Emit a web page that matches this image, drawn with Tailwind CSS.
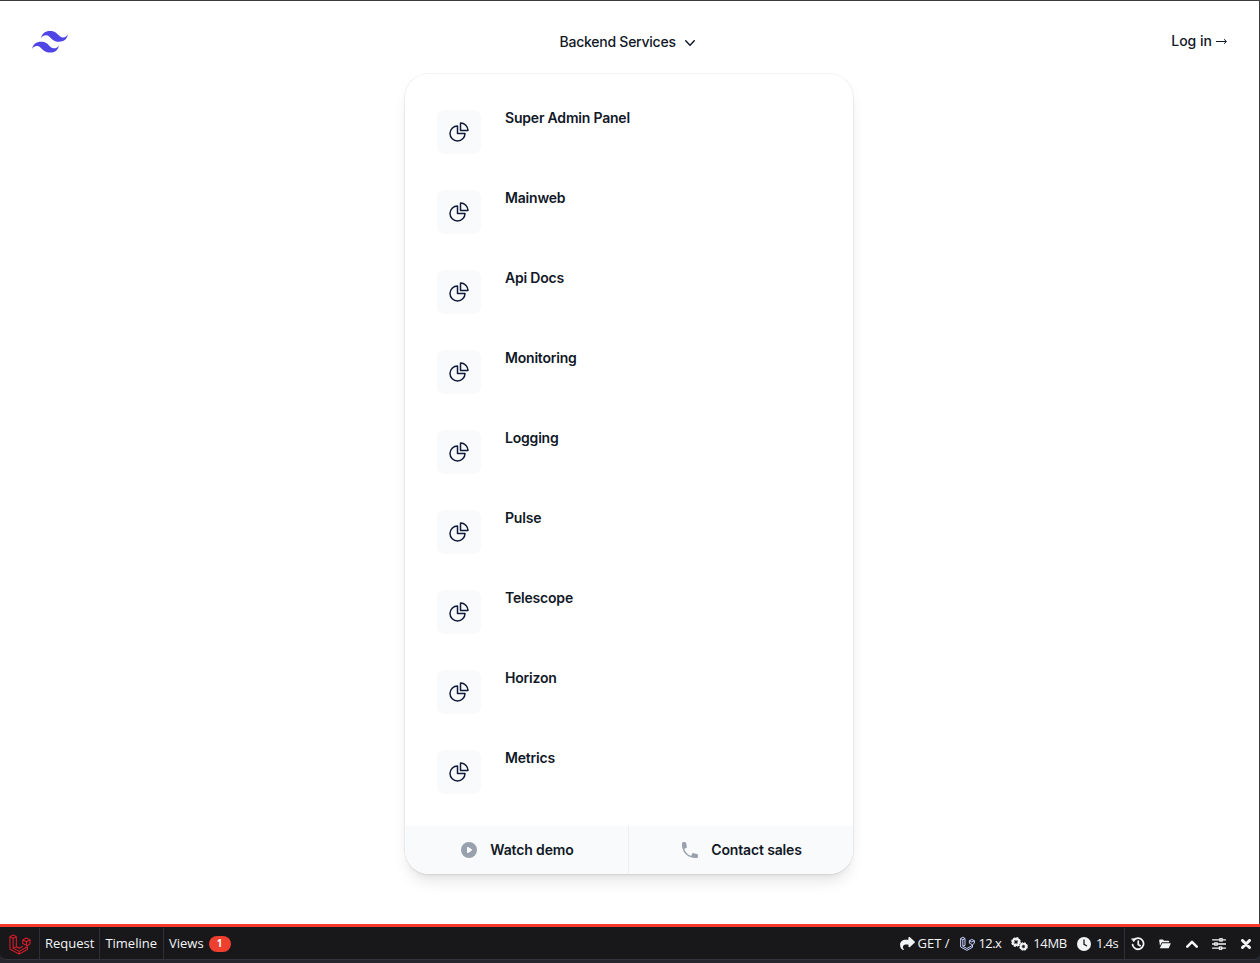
<!DOCTYPE html>
<html lang="en">
<head>
    <meta charset="UTF-8">
    <title>Backend Services</title>
    <script src="https://cdn.jsdelivr.net/npm/@tailwindcss/browser@4"></script>
</head>
<body class="bg-white h-[963px] overflow-hidden font-['Inter',sans-serif]">
    <div class="h-[963px] flex flex-col border-t border-r border-[#3c3c3c] relative">
        <!-- header -->
        <header class="flex items-start justify-between h-[73px] pl-8 pr-8">
            <svg class="w-[36px] h-[24px] mt-[29px]" viewBox="0 0 54 33" fill="#4f46e5"><path fill-rule="evenodd" clip-rule="evenodd" d="M27 0c-7.2 0-11.7 3.6-13.5 10.8 2.7-3.6 5.85-4.95 9.45-4.05 2.054.513 3.522 2.004 5.147 3.653C30.744 13.09 33.808 16.2 40.5 16.2c7.2 0 11.7-3.6 13.5-10.8-2.7 3.6-5.85 4.95-9.45 4.05-2.054-.513-3.522-2.004-5.147-3.653C36.756 3.11 33.692 0 27 0zM13.5 16.2C6.3 16.2 1.8 19.8 0 27c2.7-3.6 5.85-4.95 9.45-4.05 2.054.514 3.522 2.004 5.147 3.653C17.244 29.29 20.308 32.4 27 32.4c7.2 0 11.7-3.6 13.5-10.8-2.7 3.6-5.85 4.95-9.45 4.05-2.054-.513-3.522-2.004-5.147-3.653C23.256 19.31 20.192 16.2 13.5 16.2z"/></svg>
            <button class="flex items-center gap-[3px] text-sm leading-6 font-medium tracking-[-0.25px] text-[#111827] ml-[20px] mt-[29px]">
                Backend Services
                <svg class="w-5 h-5 ml-[1px] mt-[2px] text-[#111827]" viewBox="0 0 20 20" fill="currentColor"><path fill-rule="evenodd" d="M5.23 7.21a.75.75 0 011.06.02L10 11.168l3.71-3.938a.75.75 0 111.08 1.04l-4.25 4.5a.75.75 0 01-1.08 0l-4.25-4.5a.75.75 0 01.02-1.06z" clip-rule="evenodd"/></svg>
            </button>
            <a href="#" class="flex items-center gap-[4px] text-sm leading-6 font-medium text-[#111827] mt-[28px]">Log in
                <svg class="w-[11px] h-[7px]" viewBox="0 0 11 7" fill="none" stroke="#111827" stroke-width="1"><path d="M0 3.500h10.300M8 1.200l2.400 2.300L8 5.800"/></svg>
            </a>
        </header>

        <!-- panel -->
        <div class="w-[448px] ml-[405px] rounded-3xl bg-white shadow-lg ring-1 ring-gray-900/5 overflow-hidden">
            <div class="p-4">
                <div class="flex gap-6 p-4 h-[80px]">
                    <div class="mt-1 flex w-11 h-11 flex-none items-center justify-center rounded-lg bg-gray-50">
                        <svg class="w-6 h-6 text-[#111b3a]" fill="none" viewBox="0 0 24 24" stroke-width="1.5" stroke="currentColor"><path stroke-linecap="round" stroke-linejoin="round" d="M10.5 6a7.5 7.5 0 107.5 7.5h-7.5V6z"/><path stroke-linecap="round" stroke-linejoin="round" d="M13.5 10.5H21A7.5 7.5 0 0013.5 3v7.5z"/></svg>
                    </div>
                    <a href="#" class="text-sm leading-6 font-semibold tracking-[-0.2px] text-[#111827]">Super Admin Panel</a>
                </div>
                <div class="flex gap-6 p-4 h-[80px]">
                    <div class="mt-1 flex w-11 h-11 flex-none items-center justify-center rounded-lg bg-gray-50">
                        <svg class="w-6 h-6 text-[#111b3a]" fill="none" viewBox="0 0 24 24" stroke-width="1.5" stroke="currentColor"><path stroke-linecap="round" stroke-linejoin="round" d="M10.5 6a7.5 7.5 0 107.5 7.5h-7.5V6z"/><path stroke-linecap="round" stroke-linejoin="round" d="M13.5 10.5H21A7.5 7.5 0 0013.5 3v7.5z"/></svg>
                    </div>
                    <a href="#" class="text-sm leading-6 font-semibold tracking-[-0.2px] text-[#111827]">Mainweb</a>
                </div>
                <div class="flex gap-6 p-4 h-[80px]">
                    <div class="mt-1 flex w-11 h-11 flex-none items-center justify-center rounded-lg bg-gray-50">
                        <svg class="w-6 h-6 text-[#111b3a]" fill="none" viewBox="0 0 24 24" stroke-width="1.5" stroke="currentColor"><path stroke-linecap="round" stroke-linejoin="round" d="M10.5 6a7.5 7.5 0 107.5 7.5h-7.5V6z"/><path stroke-linecap="round" stroke-linejoin="round" d="M13.5 10.5H21A7.5 7.5 0 0013.5 3v7.5z"/></svg>
                    </div>
                    <a href="#" class="text-sm leading-6 font-semibold tracking-[-0.2px] text-[#111827]">Api Docs</a>
                </div>
                <div class="flex gap-6 p-4 h-[80px]">
                    <div class="mt-1 flex w-11 h-11 flex-none items-center justify-center rounded-lg bg-gray-50">
                        <svg class="w-6 h-6 text-[#111b3a]" fill="none" viewBox="0 0 24 24" stroke-width="1.5" stroke="currentColor"><path stroke-linecap="round" stroke-linejoin="round" d="M10.5 6a7.5 7.5 0 107.5 7.5h-7.5V6z"/><path stroke-linecap="round" stroke-linejoin="round" d="M13.5 10.5H21A7.5 7.5 0 0013.5 3v7.5z"/></svg>
                    </div>
                    <a href="#" class="text-sm leading-6 font-semibold tracking-[-0.2px] text-[#111827]">Monitoring</a>
                </div>
                <div class="flex gap-6 p-4 h-[80px]">
                    <div class="mt-1 flex w-11 h-11 flex-none items-center justify-center rounded-lg bg-gray-50">
                        <svg class="w-6 h-6 text-[#111b3a]" fill="none" viewBox="0 0 24 24" stroke-width="1.5" stroke="currentColor"><path stroke-linecap="round" stroke-linejoin="round" d="M10.5 6a7.5 7.5 0 107.5 7.5h-7.5V6z"/><path stroke-linecap="round" stroke-linejoin="round" d="M13.5 10.5H21A7.5 7.5 0 0013.5 3v7.5z"/></svg>
                    </div>
                    <a href="#" class="text-sm leading-6 font-semibold tracking-[-0.2px] text-[#111827]">Logging</a>
                </div>
                <div class="flex gap-6 p-4 h-[80px]">
                    <div class="mt-1 flex w-11 h-11 flex-none items-center justify-center rounded-lg bg-gray-50">
                        <svg class="w-6 h-6 text-[#111b3a]" fill="none" viewBox="0 0 24 24" stroke-width="1.5" stroke="currentColor"><path stroke-linecap="round" stroke-linejoin="round" d="M10.5 6a7.5 7.5 0 107.5 7.5h-7.5V6z"/><path stroke-linecap="round" stroke-linejoin="round" d="M13.5 10.5H21A7.5 7.5 0 0013.5 3v7.5z"/></svg>
                    </div>
                    <a href="#" class="text-sm leading-6 font-semibold tracking-[-0.2px] text-[#111827]">Pulse</a>
                </div>
                <div class="flex gap-6 p-4 h-[80px]">
                    <div class="mt-1 flex w-11 h-11 flex-none items-center justify-center rounded-lg bg-gray-50">
                        <svg class="w-6 h-6 text-[#111b3a]" fill="none" viewBox="0 0 24 24" stroke-width="1.5" stroke="currentColor"><path stroke-linecap="round" stroke-linejoin="round" d="M10.5 6a7.5 7.5 0 107.5 7.5h-7.5V6z"/><path stroke-linecap="round" stroke-linejoin="round" d="M13.5 10.5H21A7.5 7.5 0 0013.5 3v7.5z"/></svg>
                    </div>
                    <a href="#" class="text-sm leading-6 font-semibold tracking-[-0.2px] text-[#111827]">Telescope</a>
                </div>
                <div class="flex gap-6 p-4 h-[80px]">
                    <div class="mt-1 flex w-11 h-11 flex-none items-center justify-center rounded-lg bg-gray-50">
                        <svg class="w-6 h-6 text-[#111b3a]" fill="none" viewBox="0 0 24 24" stroke-width="1.5" stroke="currentColor"><path stroke-linecap="round" stroke-linejoin="round" d="M10.5 6a7.5 7.5 0 107.5 7.5h-7.5V6z"/><path stroke-linecap="round" stroke-linejoin="round" d="M13.5 10.5H21A7.5 7.5 0 0013.5 3v7.5z"/></svg>
                    </div>
                    <a href="#" class="text-sm leading-6 font-semibold tracking-[-0.2px] text-[#111827]">Horizon</a>
                </div>
                <div class="flex gap-6 p-4 h-[80px]">
                    <div class="mt-1 flex w-11 h-11 flex-none items-center justify-center rounded-lg bg-gray-50">
                        <svg class="w-6 h-6 text-[#111b3a]" fill="none" viewBox="0 0 24 24" stroke-width="1.5" stroke="currentColor"><path stroke-linecap="round" stroke-linejoin="round" d="M10.5 6a7.5 7.5 0 107.5 7.5h-7.5V6z"/><path stroke-linecap="round" stroke-linejoin="round" d="M13.5 10.5H21A7.5 7.5 0 0013.5 3v7.5z"/></svg>
                    </div>
                    <a href="#" class="text-sm leading-6 font-semibold tracking-[-0.2px] text-[#111827]">Metrics</a>
                </div>
            </div>
            <div class="grid grid-cols-2 divide-x divide-gray-900/5 bg-gray-50 h-[48px]">
                <a href="#" class="flex items-center justify-center gap-[11px] text-sm leading-6 font-semibold tracking-[-0.15px] text-[#111827]">
                    <svg class="w-5 h-5 text-gray-400" viewBox="0 0 20 20" fill="currentColor"><path fill-rule="evenodd" d="M2 10a8 8 0 1116 0 8 8 0 01-16 0zm6.39-2.908a.75.75 0 01.766.027l3.5 2.25a.75.75 0 010 1.262l-3.5 2.25A.75.75 0 018 12.25v-4.5a.75.75 0 01.39-.658z" clip-rule="evenodd"/></svg>
                    Watch demo
                </a>
                <a href="#" class="flex items-center justify-center gap-[11px] text-sm leading-6 font-semibold tracking-[-0.15px] text-[#111827]">
                    <svg class="w-5 h-5 text-gray-400" viewBox="0 0 20 20" fill="currentColor"><path fill-rule="evenodd" d="M2 3.5A1.5 1.5 0 013.5 2h1.148a1.5 1.5 0 011.465 1.175l.716 3.223a1.5 1.5 0 01-1.052 1.767l-.933.267c-.41.117-.643.555-.48.95a11.542 11.542 0 006.254 6.254c.395.163.833-.07.95-.48l.267-.933a1.5 1.5 0 011.767-1.052l3.223.716A1.5 1.5 0 0118 15.352V16.5a1.5 1.5 0 01-1.5 1.5H15c-1.149 0-2.263-.15-3.326-.43A13.022 13.022 0 012.43 8.326 13.019 13.019 0 012 5V3.5z" clip-rule="evenodd"/></svg>
                    Contact sales
                </a>
            </div>
        </div>

        <!-- debugbar -->
        <div class="absolute left-0 right-[-1px] top-[923px] h-[40px] bg-[#26262e] font-['Open_Sans',sans-serif] text-[13px] text-[#f3f4f6]">
            <div class="h-[36px] pt-px border-t-[3px] border-[#f4392b] bg-[#18181b] rounded-b-[6px] border-b border-b-[#33333d] flex items-stretch justify-between">
                <div class="flex items-stretch">
                    <div class="w-[40px] flex items-center justify-center border-r border-[#2e2e36]">
                        <svg class="w-[22px] h-[22px]" viewBox="0 0 24 24" fill="none" stroke="#e11d2a" stroke-width="1.1" stroke-linejoin="round"><path d="M1 4 4.500 2 8 4 4.500 6zM1 4V17.500L11 23l9-5v-4M4.500 6V16.500L11 20l9-5M8 4V15L4.500 16.500M8 15l3 1.700 4-2.200M11 20v3M15 7.500 19 5.500 23 7.500 19 9.500zM15 7.500V11.500L20 14 23 11.500V7.500M19 9.500V13.500"/></svg>
                    </div>
                    <div class="px-[5px] flex items-center border-r border-[#2e2e36]">Request</div>
                    <div class="pl-[5px] pr-[6px] flex items-center border-r border-[#2e2e36]">Timeline</div>
                    <div class="px-[5px] flex items-center gap-[5px]">Views <span class="w-[22px] h-[16px] rounded-full bg-[#ef3f2f] text-white text-[10px] font-bold flex items-center justify-center">1</span></div>
                </div>
                <div class="flex items-stretch">
                    <div class="flex items-center gap-[10px] pr-[6px] border-r border-[#2e2e36]">
                        <span class="flex items-center gap-[2px] mr-[1px]">
                            <svg class="w-[15px] h-[13px]" viewBox="0 0 512 448" fill="#f3f4f6"><path d="M307 34.8c-11.500 5.100-19 16.600-19 29.200v64H176C78.800 128 0 206.800 0 304C0 417.300 81.500 467.900 100.200 478.100c2.500 1.400 5.300 1.900 8.100 1.900c10.900 0 19.700-8.900 19.700-19.700c0-7.500-4.300-14.400-9.800-19.500C108.800 431.900 96 414.400 96 384c0-53 43-96 96-96h96v64c0 12.600 7.400 24.100 19 29.200s25 3 34.400-5.400l160-144c6.700-6.100 10.600-14.700 10.600-23.800s-3.800-17.700-10.600-23.800l-160-144c-9.400-8.500-22.900-10.600-34.400-5.400z" transform="translate(0 -32)"/></svg>
                            GET /
                        </span>
                        <span class="flex items-center gap-[3px] tracking-[-0.6px]">
                            <svg class="w-[15px] h-[15px]" viewBox="0 0 24 24" fill="none" stroke="#c7d2fe" stroke-width="1.6" stroke-linejoin="round"><path d="M1 4 4.500 2 8 4 4.500 6zM1 4V17.500L11 23l9-5v-4M4.500 6V16.500L11 20l9-5M8 4V15L4.500 16.500M15 7.500 19 5.500 23 7.500 19 9.500zM15 7.500V11.500L20 14 23 11.500V7.500"/></svg>
                            12.x
                        </span>
                        <span class="flex items-center gap-[5px] tracking-[-0.3px]">
                            <svg class="w-[17px] h-[14px]" viewBox="0 0 17 14"><circle cx="5" cy="5" r="3.200" fill="none" stroke="#f3f4f6" stroke-width="3.400" stroke-dasharray="1.700 0.800"/><circle cx="5" cy="5" r="3.200" fill="none" stroke="#f3f4f6" stroke-width="1.700"/><circle cx="12.500" cy="9.500" r="2.800" fill="none" stroke="#f3f4f6" stroke-width="3" stroke-dasharray="1.500 0.700"/><circle cx="12.500" cy="9.500" r="2.800" fill="none" stroke="#f3f4f6" stroke-width="1.600"/></svg>
                            14MB
                        </span>
                        <span class="flex items-center gap-[5px] tracking-[-0.6px]">
                            <svg class="w-[14px] h-[14px]" viewBox="0 0 14 14"><circle cx="7" cy="7" r="7" fill="#f3f4f6"/><path d="M7 3v4.300l2.600 1.500" fill="none" stroke="#18181b" stroke-width="1.300" stroke-linecap="round"/></svg>
                            1.4s
                        </span>
                    </div>
                    <div class="flex items-center pl-[6px] pr-[9px]">
                        <svg class="w-[14px] h-[14px] mr-[14px]" viewBox="0 0 16 16" fill="none" stroke="#f3f4f6" stroke-width="2" stroke-linecap="round"><path d="M3.300 3.500A6.300 6.300 0 1 1 1.800 8.600"/><path d="M1 2h4l-1.700 3.200z" fill="#f3f4f6" stroke-width="0.800"/><path d="M8.300 4.800v3.700l2.200 1.400"/></svg>
                        <svg class="w-[12px] h-[10px] mr-[15px]" viewBox="0 0 14 12" fill="#f3f4f6"><path d="M0 1.500A1 1 0 0 1 1 .500h3.500l1.300 1.500H11a1 1 0 0 1 1 1V4H3.200L1 8z"/><path d="M3.600 5H14l-2.500 6H.800z" /></svg>
                        <svg class="w-[12px] h-[8px] mr-[14px]" viewBox="0 0 14 9" fill="none" stroke="#f3f4f6" stroke-width="3" stroke-linecap="round" stroke-linejoin="round"><path d="M1.500 7.500 7 2l5.500 5.500"/></svg>
                        <svg class="w-[14px] h-[12px] mr-[15px]" viewBox="0 0 15 13" fill="none" stroke="#f3f4f6" stroke-width="1.400"><path d="M0 2h15M0 6.500h15M0 11h15"/><rect x="8.500" y=".8" width="2.400" height="2.400" fill="#18181b"/><rect x="3" y="5.300" width="2.400" height="2.400" fill="#18181b"/><rect x="8" y="9.800" width="2.400" height="2.400" fill="#18181b"/></svg>
                        <svg class="w-[10px] h-[10px]" viewBox="0 0 10 10" fill="none" stroke="#f3f4f6" stroke-width="3" stroke-linecap="round"><path d="M1.500 1.500l7 7M8.500 1.500l-7 7"/></svg>
                    </div>
                </div>
            </div>
        </div>
    </div>
</body>
</html>
